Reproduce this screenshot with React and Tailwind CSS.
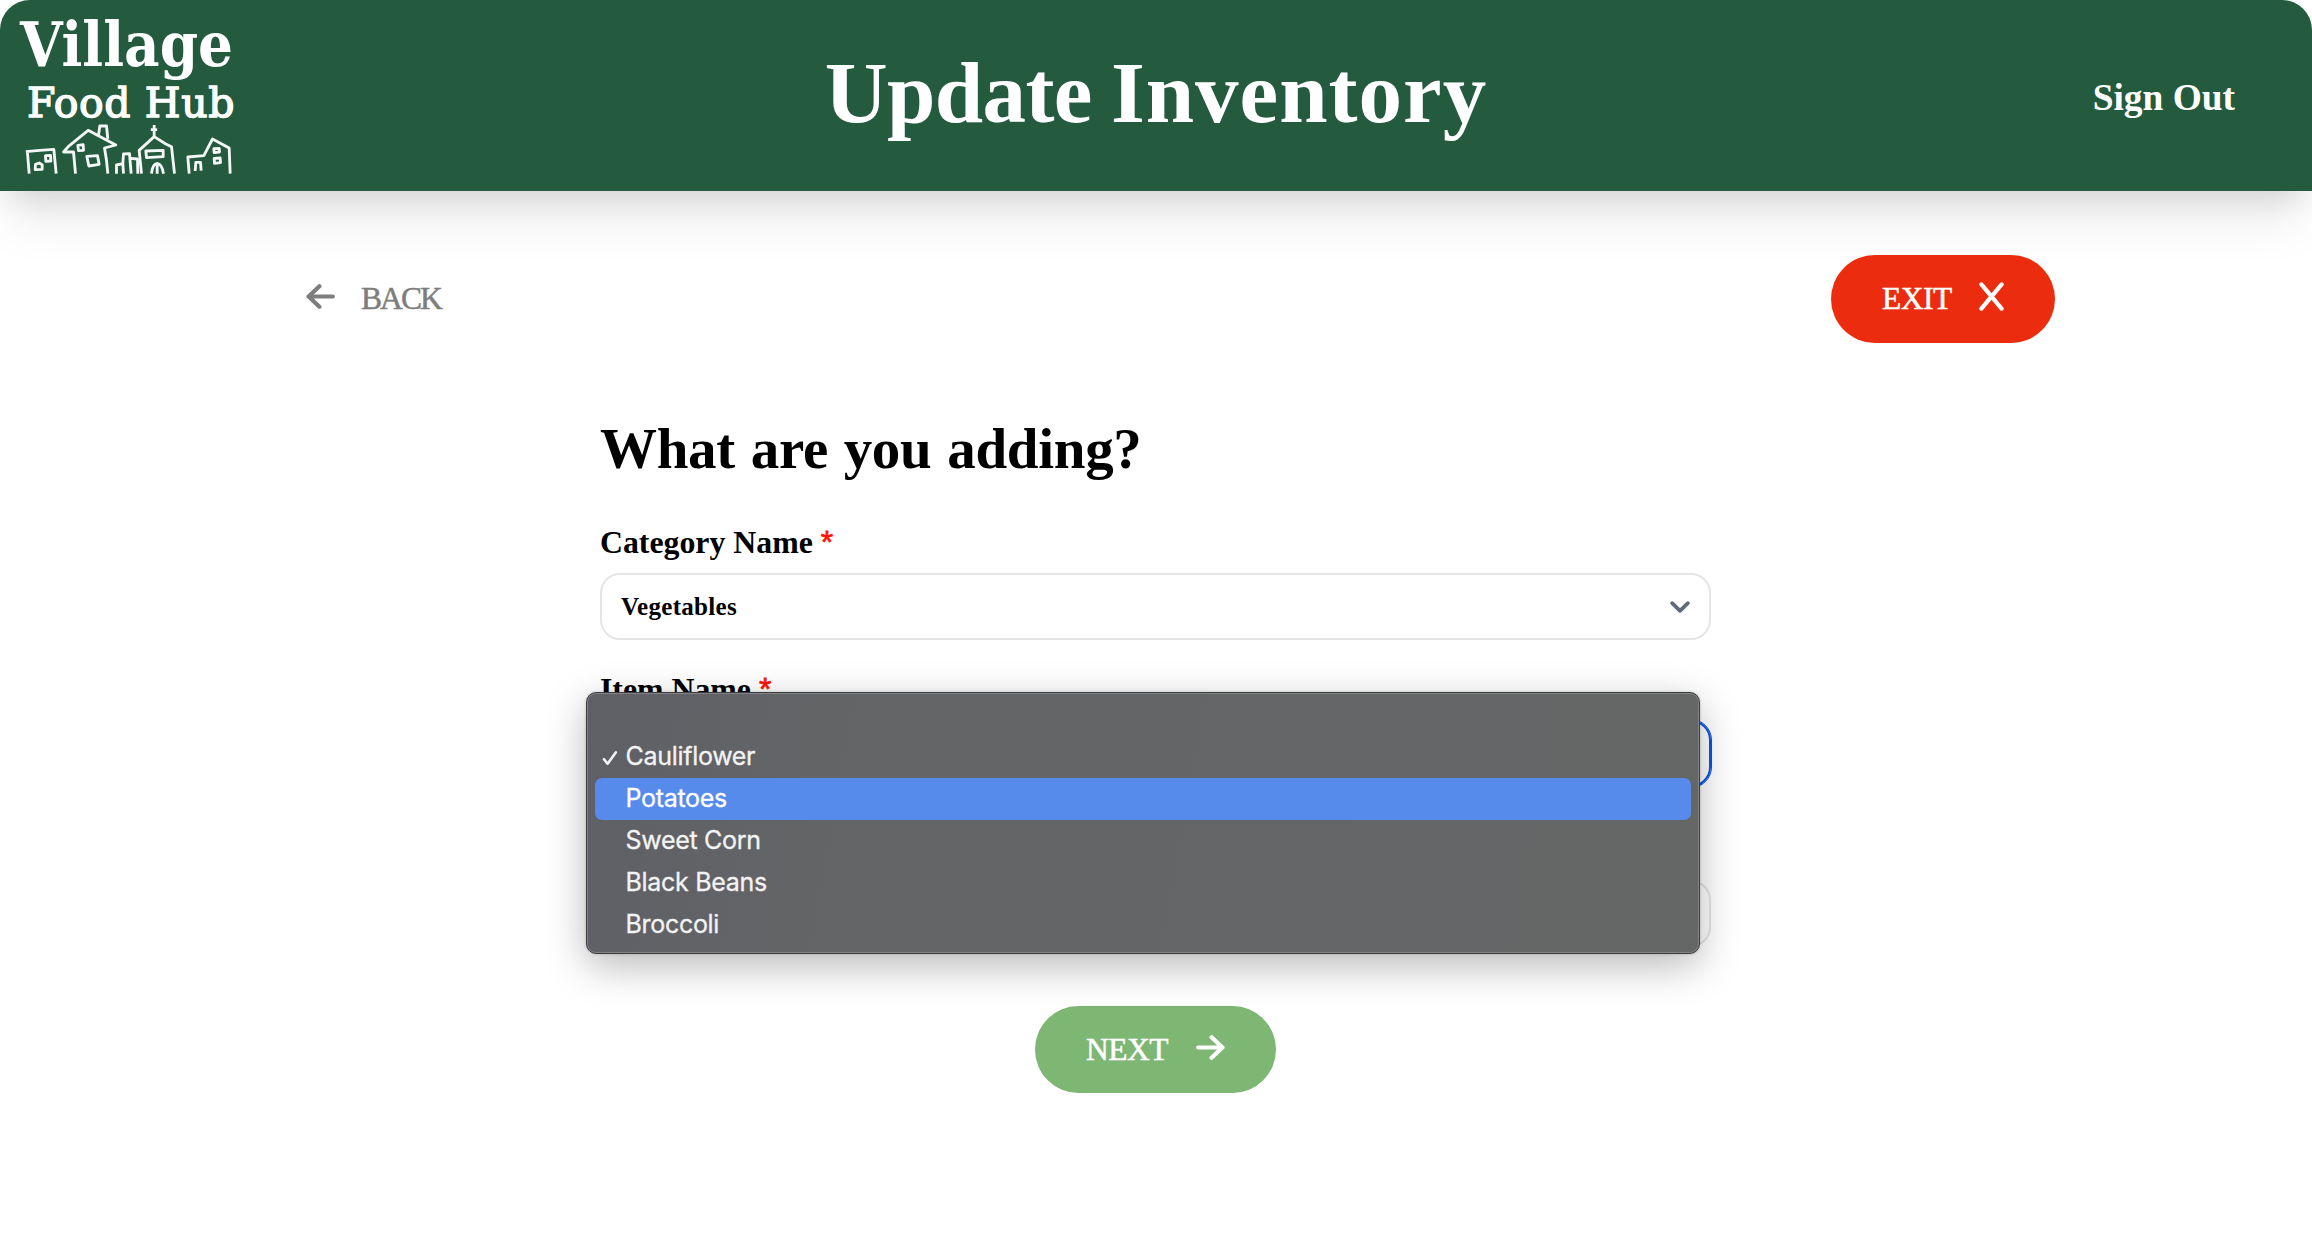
import React from "react";

function ArrowIcon({ className }) {
  return (
    <svg viewBox="0 0 29 25" className={className} fill="none" stroke="currentColor" strokeWidth="4.2" strokeLinecap="round" strokeLinejoin="round">
      <path d="M2.2 12.5H26.6M15.6 2.3L26.4 12.5L15.6 22.7" />
    </svg>
  );
}

function CloseIcon() {
  return (
    <svg viewBox="0 0 25 29" className="h-[29px] w-[25px]" fill="none" stroke="currentColor" strokeWidth="4.2" strokeLinecap="round">
      <path d="M2.4 2.4L22.6 26.6M22.6 2.4L2.4 26.6" />
    </svg>
  );
}

function Village() {
  return (
    <svg viewBox="70 368 635 156" className="ml-[23px] h-[52px] w-[212px]" fill="none" stroke="#f4f7f5" strokeWidth="8.5" strokeLinejoin="round">
      <path d="M78 454L120 450L162 447L169 520M88 520L83 458" />
      <path d="M137 466L152 465L153 482L138 483ZM106 508L107 492L118 488L127 493L127 507Z" />
      <path d="M227 520L221 455L191 455L206 438L265 390L297 407L348 434L314 443L320 480L324 520" />
      <path d="M296 405L300 377L320 377L324 416M234 435L250 433L251 450L236 451ZM261 468L293 466L298 492L267 497Z" />
      <path d="M350 520L350 494L369 490L371 520M369 490L371 461L389 460L394 520M394 474L413 476L414 520" />
      <path d="M425 520L418 450L463 409L498 431L515 439L524 520M463 412V374M453 388H472" />
      <path d="M438 452L490 450L490 469L440 472ZM455 520Q458 490 472 489Q486 490 491 520M472 490V520" />
      <path d="M568 520L564 470L612 466L638 416L688 443L691 520" />
      <path d="M586 512L588 486L602 486L604 511M642 445L658 444L659 455L643 457ZM643 474L661 473L662 487L644 489Z" />
    </svg>
  );
}

function Logo() {
  return (
    <div className="w-[260px] shrink-0 font-['DejaVu_Serif_Condensed','DejaVu_Serif',serif] text-white">
      <div className="ml-[20px] mt-[12px] h-[64px] whitespace-nowrap text-[61px] font-bold leading-[65px]">Village</div>
      <div className="ml-[27px] h-[47px] whitespace-nowrap font-['DejaVu_Serif',serif] text-[41px] leading-[55px] tracking-[0.6px] [-webkit-text-stroke:1.4px_white]">Food Hub</div>
      <Village />
    </div>
  );
}

function Label({ children }) {
  return (
    <div className="flex h-[44px] items-center gap-2 whitespace-nowrap text-[31.8px] font-bold leading-[44px]">
      {children}
      <span className="mb-[2px] font-['Liberation_Sans',sans-serif] font-normal text-[#fb1505] [-webkit-text-stroke:0.8px_currentColor]">*</span>
    </div>
  );
}

const items = [
  { name: "", state: "" },
  { name: "Cauliflower", state: "checked" },
  { name: "Potatoes", state: "active" },
  { name: "Sweet Corn", state: "" },
  { name: "Black Beans", state: "" },
  { name: "Broccoli", state: "" },
];

function Menu() {
  return (
    <ul className="absolute left-[-16.5px] top-[-30px] z-10 h-[262px] w-[1114px] rounded-[10px] border border-[#3c3d3e] bg-[linear-gradient(100deg,#5f6066_0%,#646566_25%,#656666_100%)] px-[8px] pt-[1px] font-[Inter,sans-serif] text-[25px] tracking-[-0.3px] text-[#f3f3f3] shadow-[inset_0_0_0_1px_#818283,0_12px_40px_rgba(0,0,0,0.28),0_0_3px_rgba(0,0,0,0.2)]">
      {items.map((item) => (
        <li
          key={item.name}
          className={
            item.state === "active"
              ? "flex h-[42px] items-center rounded-[7px] bg-[#568bec] text-white"
              : "flex h-[42px] items-center"
          }
        >
          <span className="flex w-[31px] justify-start pl-[7px]">
            {item.state === "checked" && (
              <svg viewBox="0 0 16 16" className="mt-[2px] size-4" fill="none" stroke="currentColor" strokeWidth="2.6" strokeLinecap="round" strokeLinejoin="round">
                <path d="M2 9.2L5.6 13.8L13.8 2.4" />
              </svg>
            )}
          </span>
          <span className="mb-px [-webkit-text-stroke:0.3px_currentColor]">{item.name}</span>
        </li>
      ))}
    </ul>
  );
}

export default function App() {
  return (
    <div className="h-[1252px] w-[2312px] overflow-hidden bg-white font-['Liberation_Serif',serif] text-black">
      <header className="flex h-[191px] items-start justify-between rounded-t-[30px] bg-[#245a3e] text-white shadow-[0_40px_50px_-10px_rgba(0,0,0,0.08),0_16px_30px_-8px_rgba(0,0,0,0.1)]">
        <Logo />
        <h1 className="flex gap-[19px] whitespace-nowrap text-[87px] font-bold leading-[186px]">
          <span className="tracking-[-0.6px]">Update</span>
          <span className="tracking-[1px]">Inventory</span>
        </h1>
        <a className="flex w-[260px] shrink-0 justify-end whitespace-nowrap pr-[77px] text-[37.4px] font-bold leading-[195px]">Sign Out</a>
      </header>

      <div className="mt-[64px] flex h-[88px] items-center justify-between pl-[306px] pr-[257px]">
        <button className="flex items-center gap-[26px] text-[31.5px] tracking-[-1.9px] text-[#7d7d7d]">
          <ArrowIcon className="mb-[5px] h-[25px] w-[29px] rotate-180" />
          <span className="leading-[40px] [-webkit-text-stroke:0.5px_currentColor]">BACK</span>
        </button>
        <button className="flex h-[88px] w-[224px] items-center rounded-full bg-[#ec2c0e] pl-[51px] text-[31.5px] tracking-[-0.5px] text-white">
          <span className="w-[97px] text-left leading-[40px] [-webkit-text-stroke:0.5px_currentColor]">EXIT</span>
          <span className="mb-[5px]"><CloseIcon /></span>
        </button>
      </div>

      <main className="ml-[600px] mt-[76px] w-[1111px]">
        <h2 className="h-[60px] whitespace-nowrap text-[57px] font-bold leading-[60px] tracking-[-0.3px] [word-spacing:1.8px]">What are you adding?</h2>
        <div className="mt-[42px]">
          <Label>Category Name</Label>
          <div className="mt-[8px] flex h-[67px] items-center justify-between rounded-[20px] border-2 border-[#e4e5e6] pl-[19px] pr-[19px] text-[25px] font-bold tracking-[0.3px]">
            Vegetables
            <svg viewBox="0 0 20 12" className="h-[12px] w-[20px]" fill="none" stroke="#626a7a" strokeWidth="3.8" strokeLinecap="round" strokeLinejoin="round">
              <path d="M2.2 2.2L10 9.8L17.8 2.2" />
            </svg>
          </div>
        </div>
        <div className="mt-[28px]">
          <Label>Item Name</Label>
          <div className="relative mt-[8px] h-[67px] rounded-[20px] border-2 border-[#0b54e5] outline-1 outline-[#0b54e5]">
            <Menu />
          </div>
        </div>
        <div className="mt-[93px] h-[67px] rounded-[20px] border-2 border-[#e4e5e6]" />
        <button className="ml-[435px] mt-[59px] flex h-[87px] w-[241px] items-center rounded-full bg-[#7eb674] pl-[51px] text-[31.5px] tracking-[-0.5px] text-white">
          <span className="w-[110px] text-left leading-[40px] [-webkit-text-stroke:0.5px_currentColor]">NEXT</span>
          <ArrowIcon className="mb-[5px] h-[25px] w-[29px]" />
        </button>
      </main>
    </div>
  );
}
